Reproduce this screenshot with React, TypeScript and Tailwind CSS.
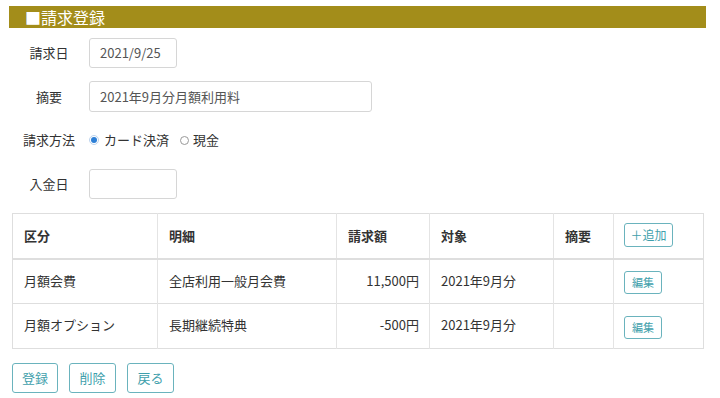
import React from "react";

const font = { fontFamily: '"Noto Sans CJK JP", "Noto Sans", sans-serif' };

function Btn({ children, className = "" }: { children: React.ReactNode; className?: string }) {
  return (
    <button
      className={`flex items-center justify-center border border-[#6ab3bd] rounded-[3px] text-[#3f9fac] bg-white ${className}`}
    >
      {children}
    </button>
  );
}

const rows = [
  { kubun: "月額会費", meisai: "全店利用一般月会費", amount: "11,500円", target: "2021年9月分" },
  { kubun: "月額オプション", meisai: "長期継続特典", amount: "-500円", target: "2021年9月分" },
];

export default function App() {
  return (
    <div style={font} className="w-[720px] h-[398px] bg-white text-[#333] text-[13px] overflow-hidden">
      <div className="pt-[6px] pl-[9px]">
        <div className="w-[697px] h-[22px] bg-[#a38d1a] text-white text-[16px] leading-[22px] pl-[16px]">
          ■請求登録
        </div>
      </div>

      <div className="pl-[12px] pt-[10px] flex flex-col">
        <div className="flex items-center h-[30px]">
          <div className="w-[74px] text-center">請求日</div>
          <div className="ml-[3px] w-[88px] h-[30px] border border-[#d6d6d6] rounded-[3px] flex items-center pl-[10px] text-[#555]">
            2021/9/25
          </div>
        </div>
        <div className="flex items-center h-[31px] mt-[13px]">
          <div className="w-[74px] text-center">摘要</div>
          <div className="ml-[3px] w-[283px] h-[31px] border border-[#d6d6d6] rounded-[3px] flex items-center pl-[10px] text-[#555]">
            2021年9月分月額利用料
          </div>
        </div>
        <div className="flex items-center h-[20px] mt-[18px]">
          <div className="w-[74px] text-center">請求方法</div>
          <div className="ml-[3px] flex items-center">
            <span className="w-[10px] h-[10px] rounded-full border border-[#bcd3ee] bg-white flex items-center justify-center">
              <span className="w-[6px] h-[6px] rounded-full bg-[#2d7fd6]" />
            </span>
            <span className="ml-[5px]">カード決済</span>
            <span className="ml-[11px] w-[9px] h-[9px] rounded-full border border-[#999] bg-white" />
            <span className="ml-[4px]">現金</span>
          </div>
        </div>
        <div className="flex items-center h-[30px] mt-[19px]">
          <div className="w-[74px] text-center">入金日</div>
          <div className="ml-[3px] w-[88px] h-[30px] border border-[#d6d6d6] rounded-[3px]" />
        </div>

        <table className="mt-[14px] w-[692px] border-collapse border border-[#dedede]">
          <thead>
            <tr className="h-[45px] border-b-2 border-[#dedede]">
              <th className="w-[145px] text-left font-bold pl-[11px] border-r border-[#e4e4e4]">区分</th>
              <th className="w-[179px] text-left font-bold pl-[11px] border-r border-[#e4e4e4]">明細</th>
              <th className="w-[93px] text-left font-bold pl-[11px] border-r border-[#e4e4e4]">請求額</th>
              <th className="w-[124px] text-left font-bold pl-[11px] border-r border-[#e4e4e4]">対象</th>
              <th className="w-[60px] text-left font-bold pl-[11px] border-r border-[#e4e4e4]">摘要</th>
              <th className="text-left font-normal pl-[10px]">
                <Btn className="w-[49px] h-[24px] text-[12px] -mt-[2px]">＋追加</Btn>
              </th>
            </tr>
          </thead>
          <tbody>
            {rows.map((r) => (
              <tr key={r.kubun} className="h-[45px] border-b border-[#dedede]">
                <td className="pl-[11px] border-r border-[#e4e4e4] pb-[2px]">{r.kubun}</td>
                <td className="pl-[11px] border-r border-[#e4e4e4] pb-[2px]">{r.meisai}</td>
                <td className="pr-[10px] text-right border-r border-[#e4e4e4] pb-[2px]">{r.amount}</td>
                <td className="pl-[11px] border-r border-[#e4e4e4] pb-[2px]">{r.target}</td>
                <td className="border-r border-[#e4e4e4]"></td>
                <td className="pl-[10px]">
                  <Btn className="w-[38px] h-[23px] text-[11px] mt-[2px]">編集</Btn>
                </td>
              </tr>
            ))}
          </tbody>
        </table>

        <div className="flex mt-[14px] gap-[11px]">
          <Btn className="w-[46px] h-[30px] text-[13px]">登録</Btn>
          <Btn className="w-[47px] h-[30px] text-[13px]">削除</Btn>
          <Btn className="w-[47px] h-[30px] text-[13px]">戻る</Btn>
        </div>
      </div>
    </div>
  );
}
